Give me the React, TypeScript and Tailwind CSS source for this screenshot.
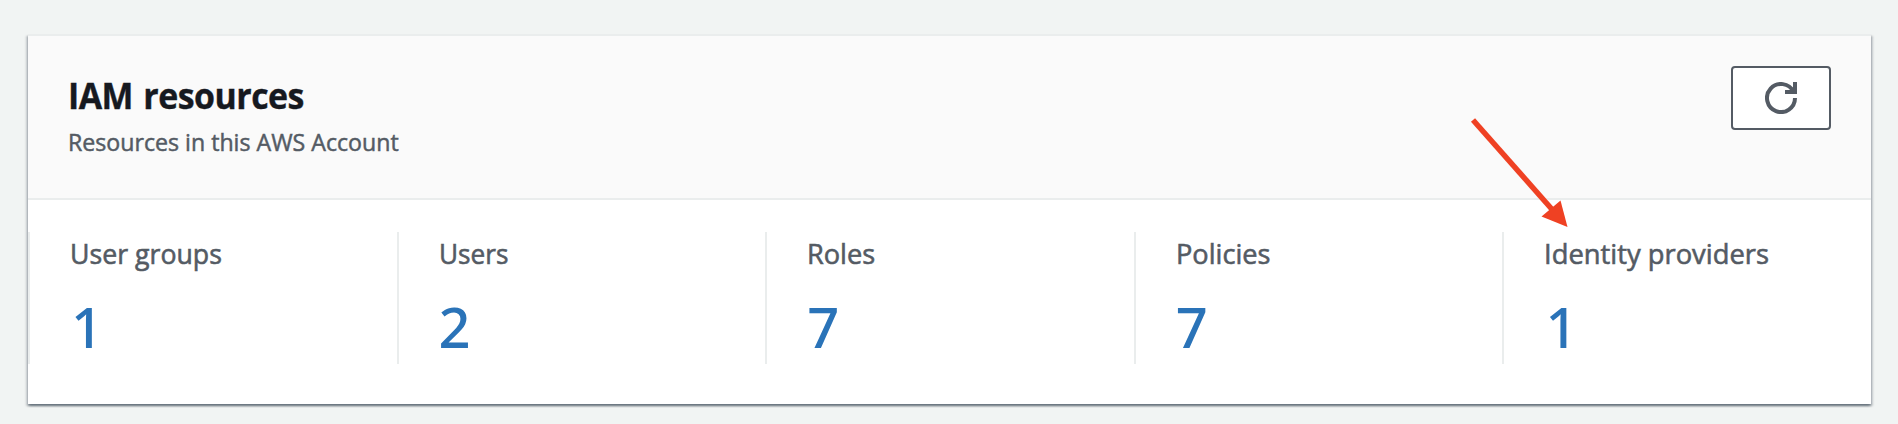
const resources = [
  { label: 'User groups', value: 1, labelClass: 'scale-x-[0.953]', valueClass: 'pl-px' },
  { label: 'Users', value: 2, labelClass: 'scale-x-[0.935]', valueClass: '' },
  { label: 'Roles', value: 7, labelClass: 'scale-x-[0.97]', valueClass: '' },
  { label: 'Policies', value: 7, labelClass: 'scale-x-[0.97]', valueClass: '' },
  { label: 'Identity providers', value: 1, labelClass: 'scale-x-[0.977]', valueClass: 'pl-px' },
];

function RefreshIcon() {
  return (
    <svg width="32" height="32" viewBox="0 0 32 32" fill="none" stroke="#545b64" strokeWidth="4">
      <path d="M30 16A14 14 0 1 1 28.500 9.700" />
      <path d="M20 10H30V0" />
    </svg>
  );
}

export default function App() {
  return (
    <div className="relative h-[424px] w-[1898px] overflow-hidden bg-[#f1f4f3] pl-7 pt-[34px] font-['Open_Sans','Noto_Sans',sans-serif]">
      <section className="h-[370px] w-[1843px] bg-white shadow-[0_2px_2px_0_rgba(0,20,36,0.38),2px_2px_2px_0_rgba(0,20,36,0.17),-2px_2px_2px_0_rgba(0,20,36,0.17)]">
        <header className="flex h-[166px] items-start justify-between border-y-2 border-[#eaeded] bg-[#fafafa] pl-10 pr-10 pt-[30px]">
          <div>
            <h2 className="mb-px mt-0.5 origin-left scale-x-[0.94] text-[36px] font-bold leading-[56px] tracking-[-0.5px] text-[#16191f] [-webkit-text-stroke:0.4px_#16191f] [word-spacing:2px]">IAM resources</h2>
            <p className="-mt-px origin-left scale-x-[0.965] text-[24px] leading-[36px] text-[#545b64] [-webkit-text-stroke:0.5px_#545b64]">Resources in this AWS Account</p>
          </div>
          <button aria-label="Refresh" className="flex h-16 w-[100px] items-center justify-center rounded-[4px] border-2 border-[#545b64] bg-white">
            <RefreshIcon />
          </button>
        </header>
        <div className="grid grid-cols-5 pt-8">
          {resources.map((r) => (
            <div key={r.label} className="h-[132px] border-l-2 border-[#eaeded] pl-10">
              <div className={`-mt-px origin-left text-[28px] leading-[44px] text-[#545b64] [-webkit-text-stroke:0.6px_#545b64] ${r.labelClass}`}>{r.label}</div>
              <a className={`mt-[11px] block font-['Noto_Sans',sans-serif] text-[56px] font-medium leading-[80px] text-[#2a73b8] ${r.valueClass}`}>{r.value}</a>
            </div>
          ))}
        </div>
      </section>
      <svg className="absolute left-[1460px] top-[110px]" width="120" height="125" viewBox="1460 110 120 125">
        <path d="M1473 120L1553 210.500" stroke="#ef4123" strokeWidth="5.5" />
        <path d="M1567.500 227L1541.500 216.500L1560.500 200.500Z" fill="#ef4123" />
      </svg>
    </div>
  );
}
